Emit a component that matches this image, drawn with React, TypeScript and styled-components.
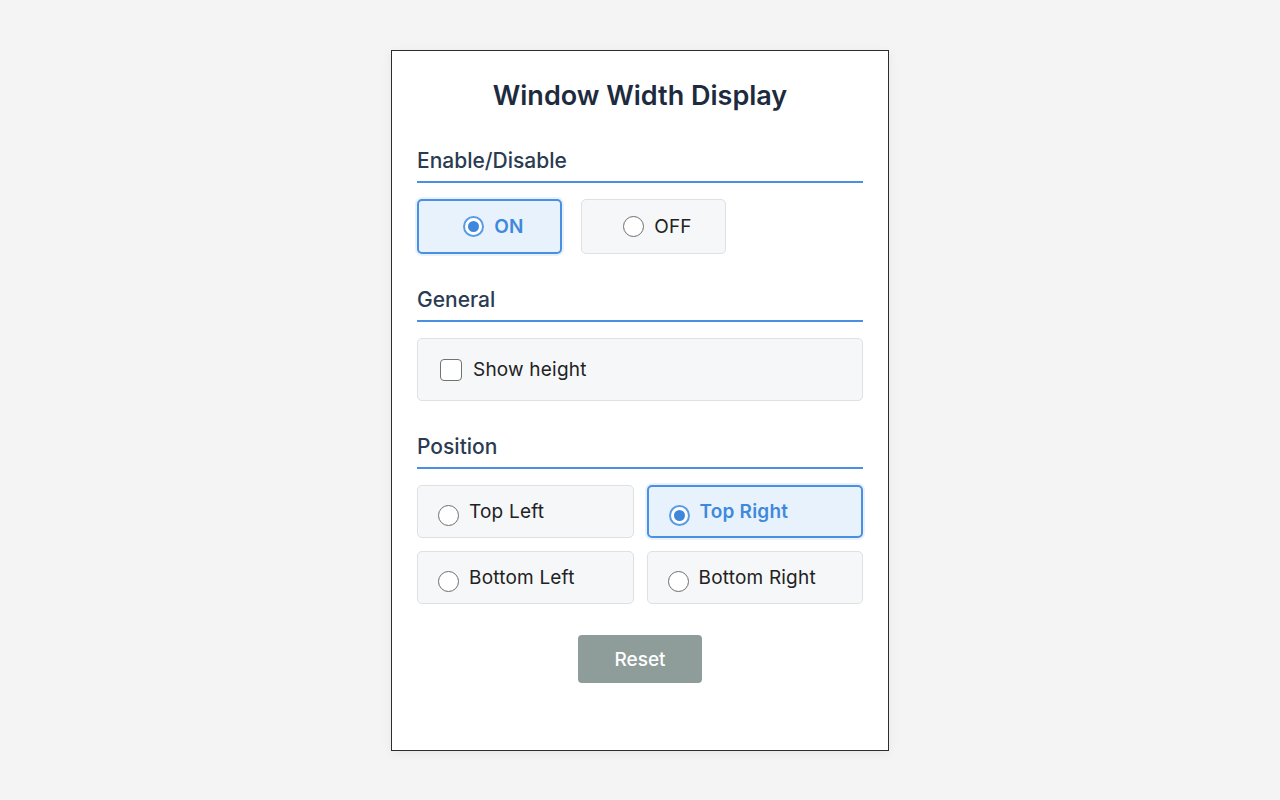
import React, { useState } from "react";
import styled, { createGlobalStyle, css } from "styled-components";

const Global = createGlobalStyle`
  html, body { margin: 0; padding: 0; background: #f4f4f4; }
  body { font-family: Inter, "Noto Sans", "Liberation Sans", sans-serif; -webkit-font-smoothing: antialiased; }
  * { box-sizing: border-box; }
`;

const Page = styled.div`
  display: flex;
  justify-content: center;
  padding-top: 50px;
  min-height: 800px;
`;

const Panel = styled.div`
  width: 498px;
  height: 701px;
  background: #ffffff;
  border: 1px solid #2d2d2d;
  box-shadow: 0 2px 10px rgba(0, 0, 0, 0.06);
  padding: 29px 25px 0;
  display: flex;
  flex-direction: column;
`;

const Title = styled.h1`
  margin: 0;
  font-size: 27px;
  line-height: 32px;
  font-weight: 600;
  color: #1e2b3e;
  text-align: center;
`;

const SectionTitle = styled.h2<{ $first?: boolean }>`
  margin: ${(p) => (p.$first ? "36px" : "33px")} 0 16px;
  padding-bottom: 8px;
  font-size: 21px;
  line-height: 25px;
  font-weight: 500;
  color: #2a3b52;
  border-bottom: 2px solid #4a90e2;
`;

const Row = styled.div`
  display: flex;
  gap: 19px;
`;

const Grid = styled.div`
  display: grid;
  grid-template-columns: 1fr 1fr;
  gap: 13px;
`;

const Option = styled.label<{ $active?: boolean; $center?: boolean; $w?: number; $h: number }>`
  display: flex;
  align-items: center;
  justify-content: ${(p) => (p.$center ? "center" : "flex-start")};
  gap: 10px;
  width: ${(p) => (p.$w ? `${p.$w}px` : "auto")};
  height: ${(p) => p.$h}px;
  padding: ${(p) => (p.$center ? "0 0 0 8px" : "0 20px")};
  border-radius: 5px;
  font-size: 19px;
  letter-spacing: 0.2px;
  cursor: pointer;
  ${(p) =>
    p.$active
      ? css`
          background: #e8f2fd;
          border: 2px solid #4a90e2;
          color: #3f89dc;
          font-weight: 600;
          box-shadow: 0 0 0 2px rgba(74, 144, 226, 0.12);
        `
      : css`
          background: #f6f7f9;
          border: 1px solid #dde1e6;
          color: #222;
          font-weight: 400;
        `}
`;

const Radio = styled.span<{ $checked?: boolean; $drop?: boolean }>`
  flex: none;
  width: 21px;
  height: 21px;
  border-radius: 50%;
  margin-top: ${(p) => (p.$drop ? "7px" : "0")};
  display: flex;
  align-items: center;
  justify-content: center;
  background: #fff;
  ${(p) =>
    p.$checked
      ? css`
          border: 2px solid #5a9be6;
          &::after {
            content: "";
            width: 11px;
            height: 11px;
            border-radius: 50%;
            background: #3f87dc;
          }
        `
      : css`
          border: 1.6px solid #6e6e6e;
        `}
`;

const Check = styled.span`
  flex: none;
  width: 22px;
  height: 22px;
  border-radius: 4px;
  border: 1.6px solid #727272;
  background: #fff;
`;

const CheckRow = styled.label`
  display: flex;
  align-items: center;
  gap: 11px;
  height: 63px;
  padding: 0 22px;
  background: #f6f7f9;
  border: 1px solid #dde1e6;
  border-radius: 5px;
  font-size: 19px;
  letter-spacing: 0.2px;
  color: #222;
  cursor: pointer;
`;

const Footer = styled.div`
  display: flex;
  justify-content: center;
  margin-top: 31px;
`;

const ResetButton = styled.button`
  width: 124px;
  height: 48px;
  border: none;
  border-radius: 4px;
  background: #8e9c9a;
  color: #fff;
  font-family: inherit;
  font-size: 19px;
  font-weight: 500;
  cursor: pointer;
`;

const Label = styled.span`
  line-height: 22px;
`;

const positions = ["Top Left", "Top Right", "Bottom Left", "Bottom Right"];

export default function App() {
  const [on, setOn] = useState(true);
  const [pos, setPos] = useState("Top Right");
  const [showHeight, setShowHeight] = useState(false);

  return (
    <>
      <Global />
      <Page>
        <Panel>
          <Title>Window Width Display</Title>

          <SectionTitle $first>Enable/Disable</SectionTitle>
          <Row>
            <Option $center $w={145} $h={55} $active={on} onClick={() => setOn(true)}>
              <Radio $checked={on} />
              <Label>ON</Label>
            </Option>
            <Option $center $w={145} $h={55} $active={!on} onClick={() => setOn(false)}>
              <Radio $checked={!on} />
              <Label>OFF</Label>
            </Option>
          </Row>

          <SectionTitle>General</SectionTitle>
          <CheckRow onClick={() => setShowHeight(!showHeight)}>
            <Check />
            <Label>Show height</Label>
          </CheckRow>

          <SectionTitle>Position</SectionTitle>
          <Grid>
            {positions.map((p) => (
              <Option key={p} $h={53} $active={pos === p} onClick={() => setPos(p)}>
                <Radio $drop $checked={pos === p} />
                <Label>{p}</Label>
              </Option>
            ))}
          </Grid>

          <Footer>
            <ResetButton>Reset</ResetButton>
          </Footer>
        </Panel>
      </Page>
    </>
  );
}
